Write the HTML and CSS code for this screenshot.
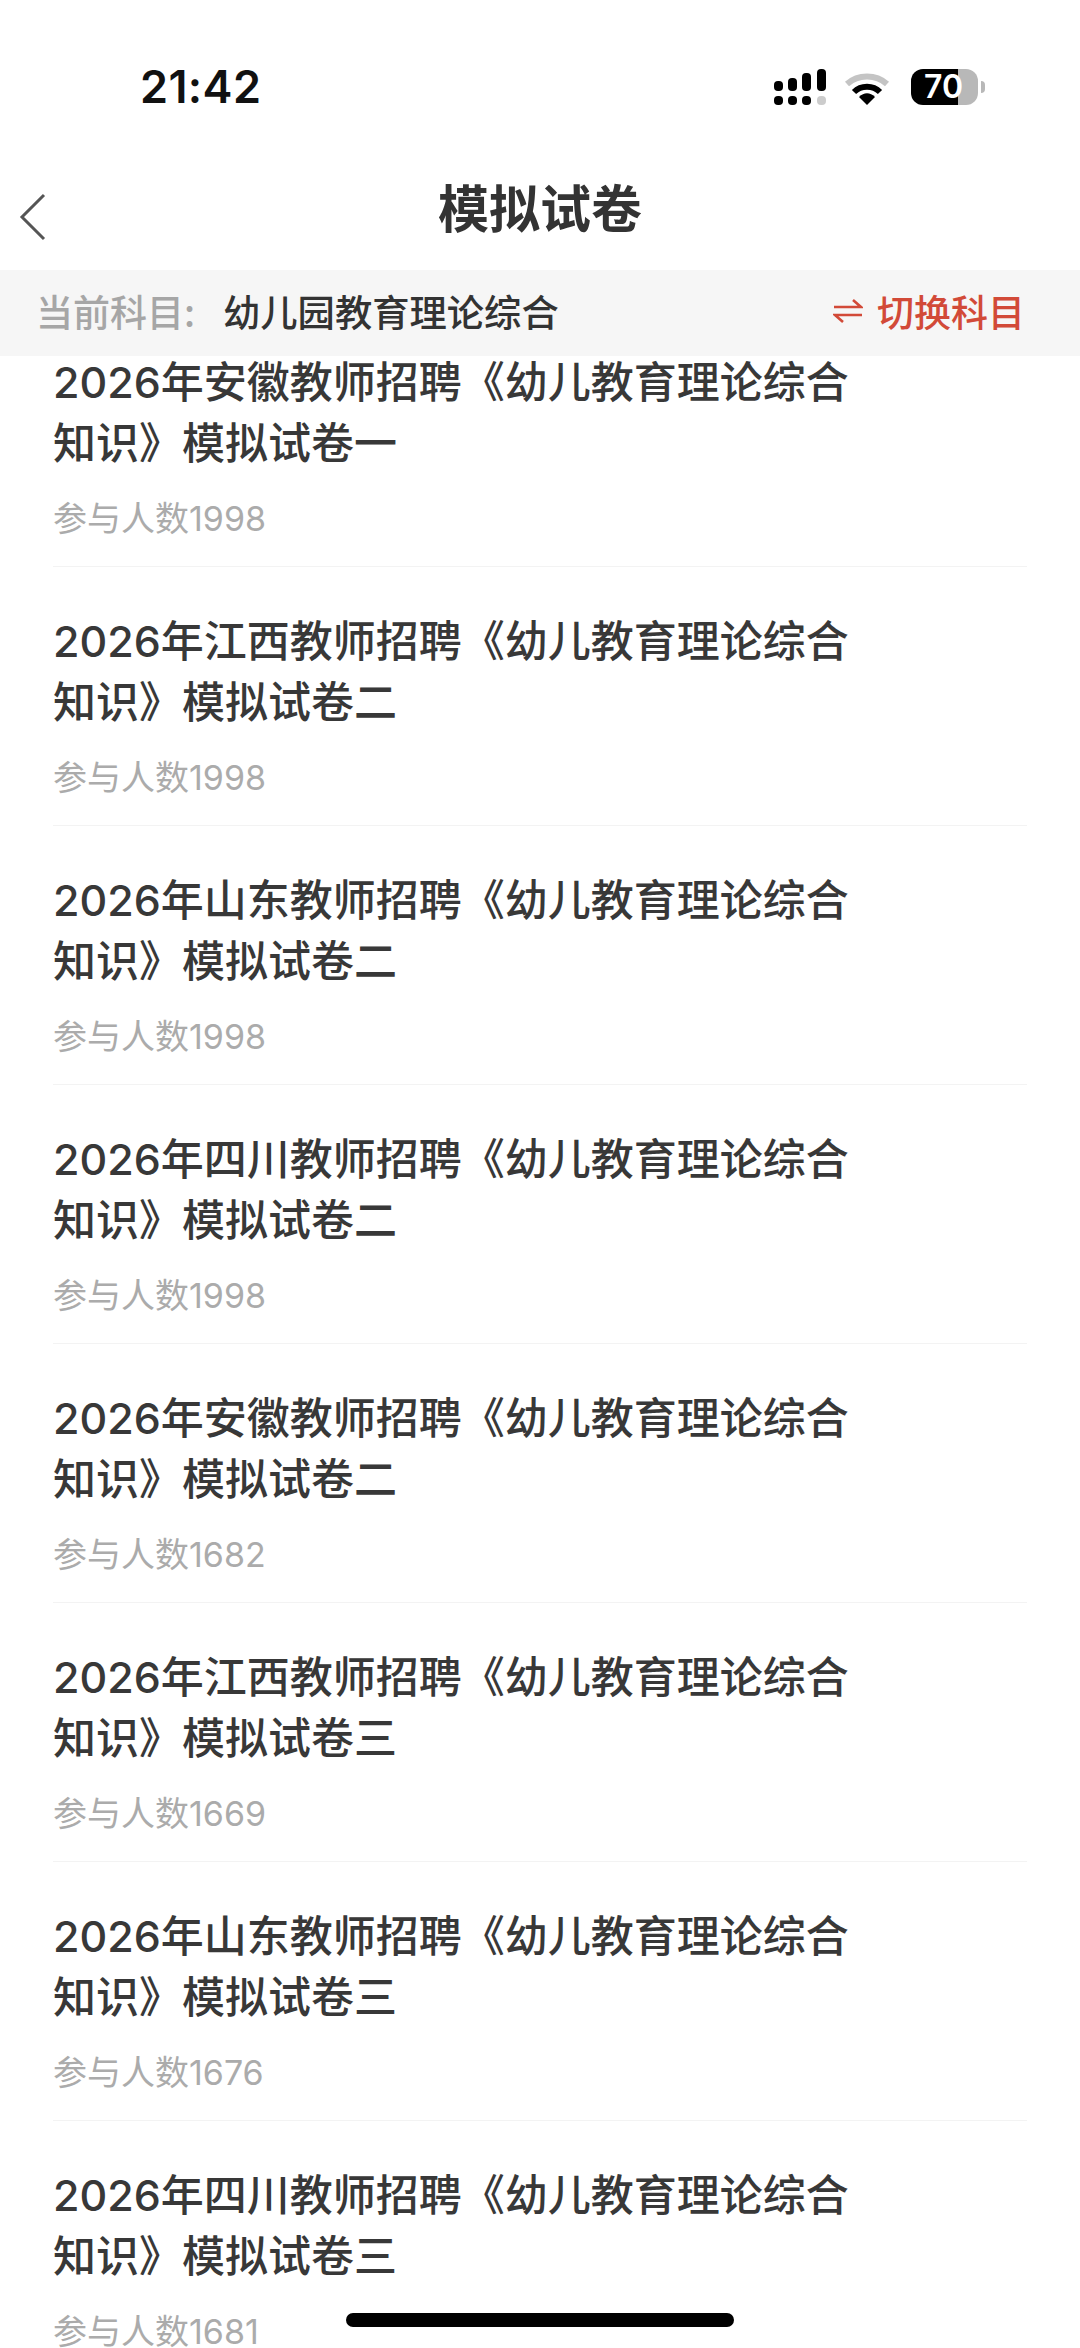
FILE: index.html
```html
<!DOCTYPE html>
<html lang="zh-CN">
<head>
<meta charset="utf-8">
<title>模拟试卷</title>
<link rel="stylesheet" href="styles.css">
</head>
<body>
<div class="screen">
  <div class="status">
    <span class="time">21:42</span>
    <div class="status-icons">
      <svg class="signal" width="52" height="38" viewBox="0 0 52 38">
        <rect x="0" y="12" width="9" height="10" rx="4" fill="#000"/>
        <rect x="14" y="9" width="9" height="13" rx="4" fill="#000"/>
        <rect x="28" y="4" width="9" height="18" rx="4" fill="#000"/>
        <rect x="43" y="0" width="9" height="22" rx="4" fill="#000"/>
        <rect x="0" y="27" width="9" height="9" rx="4" fill="#000"/>
        <rect x="14" y="27" width="9" height="9" rx="4" fill="#000"/>
        <rect x="28" y="27" width="9" height="9" rx="4" fill="#000"/>
        <rect x="43" y="27" width="9" height="9" rx="4" fill="#ccc"/>
      </svg>
      <svg class="wifi" width="46" height="34" viewBox="0 0 46 34">
        <path d="M3 13C14 3 32 3 43 13" fill="none" stroke="#c4c4c4" stroke-width="6"/>
        <path d="M10 21C17 14 29 14 36 21" fill="none" stroke="#000" stroke-width="6"/>
        <path d="M15 26C20 21 26 21 31 26L23 34Z" fill="#000"/>
      </svg>
      <div class="battery">
        <div class="battery-body"><span class="battery-text">70</span></div>
        <span class="battery-tip"></span>
      </div>
    </div>
  </div>

  <header class="nav">
    <svg class="back" width="28" height="48" viewBox="0 0 28 48">
      <path d="M25 2L3 24L25 46" fill="none" stroke="#555" stroke-width="3"/>
    </svg>
    <h1 class="nav-title">模拟试卷</h1>
  </header>

  <div class="subject-bar">
    <div class="subject-info">
      <span class="subject-label">当前科目:</span>
      <span class="subject-name">幼儿园教育理论综合</span>
    </div>
    <div class="subject-switch">
      <svg class="switch-icon" width="30" height="24" viewBox="0 0 30 24">
        <path d="M1 8H28L20 1M29 16H2L10 23" fill="none" stroke="#d24a38" stroke-width="2.6"/>
      </svg>
      <span>切换科目</span>
    </div>
  </div>

  <main class="list">
    <article class="row"><h2 class="row-title">2026年安徽教师招聘《幼儿教育理论综合知识》模拟试卷一</h2><p class="row-meta">参与人数1998</p></article>
    <article class="row"><h2 class="row-title">2026年江西教师招聘《幼儿教育理论综合知识》模拟试卷二</h2><p class="row-meta">参与人数1998</p></article>
    <article class="row"><h2 class="row-title">2026年山东教师招聘《幼儿教育理论综合知识》模拟试卷二</h2><p class="row-meta">参与人数1998</p></article>
    <article class="row"><h2 class="row-title">2026年四川教师招聘《幼儿教育理论综合知识》模拟试卷二</h2><p class="row-meta">参与人数1998</p></article>
    <article class="row"><h2 class="row-title">2026年安徽教师招聘《幼儿教育理论综合知识》模拟试卷二</h2><p class="row-meta">参与人数1682</p></article>
    <article class="row"><h2 class="row-title">2026年江西教师招聘《幼儿教育理论综合知识》模拟试卷三</h2><p class="row-meta">参与人数1669</p></article>
    <article class="row"><h2 class="row-title">2026年山东教师招聘《幼儿教育理论综合知识》模拟试卷三</h2><p class="row-meta">参与人数1676</p></article>
    <article class="row"><h2 class="row-title">2026年四川教师招聘《幼儿教育理论综合知识》模拟试卷三</h2><p class="row-meta">参与人数1681</p></article>
  </main>

  <div class="home-indicator"></div>
</div>
</body>
</html>
```

FILE: styles.css
```css
* { box-sizing: border-box; }
html, body { margin: 0; padding: 0; background: #fff; }
body { font-family: "Inter", "Noto Sans CJK SC", sans-serif; color: #333; }

.screen {
  position: relative;
  width: 1080px;
  height: 2348px;
  overflow: hidden;
  display: flex;
  flex-direction: column;
  background: #fff;
}

.status {
  height: 130px;
  flex: none;
  display: flex;
  align-items: flex-start;
  justify-content: space-between;
  padding: 60px 95px 0 140px;
}
.time {
  font-family: "Inter", sans-serif;
  font-size: 45px;
  font-weight: 600;
  line-height: 54px;
  color: #111;
  letter-spacing: 0.4px;
}
.status-icons {
  display: flex;
  align-items: flex-start;
  margin-top: 9px;
}
.signal { margin-right: 18px; }
.wifi { margin-top: 2px; margin-right: 21px; }
.battery { display: flex; align-items: center; }
.battery-body {
  width: 67px;
  height: 36px;
  border-radius: 12px;
  background: linear-gradient(90deg, #000 0, #000 47px, #b8b8b8 47px, #b8b8b8 100%);
  display: flex;
  align-items: center;
  justify-content: center;
}
.battery-text {
  font-family: "Inter", sans-serif;
  font-size: 32px;
  font-weight: 600;
  color: #fff;
  line-height: 36px;
  margin-right: 2px;
}
.battery-tip {
  width: 4px;
  height: 12px;
  margin-left: 3px;
  background: #b8b8b8;
  border-radius: 0 4px 4px 0;
}

.nav {
  position: relative;
  height: 140px;
  flex: none;
  display: flex;
  align-items: center;
  justify-content: center;
}
.back {
  position: absolute;
  left: 19px;
  top: 63px;
}
.nav-title {
  margin: 0;
  font-family: "Noto Sans CJK SC", sans-serif;
  font-size: 51px;
  font-weight: 700;
  color: #333;
  line-height: 70px;
  position: relative;
  top: 6px;
}

.subject-bar {
  position: relative;
  z-index: 1;
  height: 86px;
  flex: none;
  display: flex;
  align-items: center;
  justify-content: space-between;
  padding: 0 55px 5px 36px;
  background: #f6f6f6;
  font-family: "Noto Sans CJK SC", sans-serif;
}
.subject-info { display: flex; align-items: center; gap: 28px; }
.subject-label { font-size: 37px; color: #a6a6a6; font-weight: 500; }
.subject-name { font-size: 37.3px; color: #333; font-weight: 500; }
.subject-switch {
  display: flex;
  align-items: center;
  gap: 14px;
  color: #d24a38;
  font-size: 37px;
  font-weight: 500;
}

.list {
  flex: 1;
  margin-top: -4px;
  padding: 0 53px;
  overflow: hidden;
}
.row {
  height: 259px;
  margin: 0;
  border-bottom: 1px solid #f3f3f3;
  padding-top: 44px;
}
.row:first-child {
  height: 215px;
  padding-top: 0;
}
.row-title {
  margin: 0;
  width: 825px;
  font-size: 43px;
  font-weight: 500;
  line-height: 61px;
  color: #383838;
}
.row-meta {
  margin: 19px 0 0;
  font-size: 34px;
  line-height: 52px;
  color: #ababab;
}

.home-indicator {
  position: absolute;
  left: 346px;
  top: 2313px;
  width: 388px;
  height: 14px;
  border-radius: 7px;
  background: #000;
}
```
